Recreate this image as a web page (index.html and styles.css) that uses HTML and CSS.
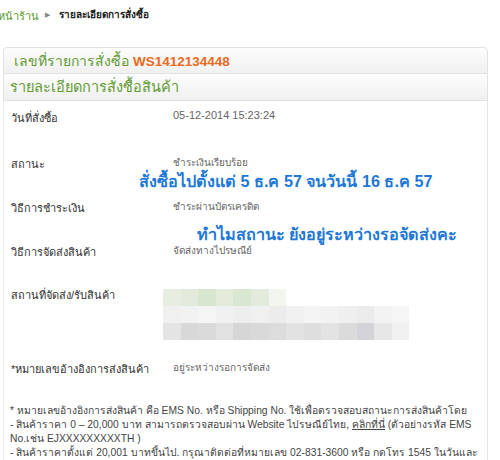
FILE: index.html
```html
<!DOCTYPE html>
<html lang="th">
<head>
    <meta charset="UTF-8">
    <title>รายละเอียดการสั่งซื้อ</title>
    <link rel="stylesheet" href="styles.css">
</head>
<body>
    <!-- Breadcrumb -->
    <div class="crumbs">
        <a href="#">หน้าร้าน</a>
        <span class="arrow">&#9654;</span>
        <b>รายละเอียดการสั่งซื้อ</b>
    </div>

    <!-- Order box -->
    <div class="order">
        <div class="order-head">เลขที่รายการสั่งซื้อ <span class="order-no">WS1412134448</span></div>
        <div class="order-sub">รายละเอียดการสั่งซื้อสินค้า</div>

        <div class="order-body">
            <div class="row r-date">
                <div class="label">วันที่สั่งซื้อ</div>
                <div class="value num">05-12-2014 15:23:24</div>
            </div>
            <div class="row r-status">
                <div class="label">สถานะ</div>
                <div class="value">ชำระเงินเรียบร้อย</div>
            </div>
            <div class="note-blue n1">สั่งซื้อไปตั้งแต่ 5 ธ.ค 57 จนวันนี้ 16 ธ.ค 57</div>
            <div class="row r-pay">
                <div class="label">วิธีการชำระเงิน</div>
                <div class="value">ชำระผ่านบัตรเครดิต</div>
            </div>
            <div class="note-blue n2">ทำไมสถานะ ยังอยู่ระหว่างรอจัดส่งคะ</div>
            <div class="row r-ship">
                <div class="label">วิธีการจัดส่งสินค้า</div>
                <div class="value">จัดส่งทางไปรษณีย์</div>
            </div>
            <div class="row r-addr">
                <div class="label">สถานที่จัดส่ง/รับสินค้า</div>
                <div class="mosaic">
                    <div class="mrow">
                        <i style="background:#e7eee1"></i><i style="background:#e2ebdb"></i><i style="background:#d8e5cf"></i><i style="background:#e3ebdb"></i><i style="background:#d9e6d1"></i><i style="background:#e3ecdc"></i><i style="background:#f2f6ee"></i>
                    </div>
                    <div class="mrow">
                        <i style="background:#f0f0f0"></i><i style="background:#f2f2f2"></i><i style="background:#f5f5f5"></i><i style="background:#f1f1f1"></i><i style="background:#eeeeee"></i><i style="background:#f0f0f0"></i><i style="background:#ececec"></i><i style="background:#f1f1f1"></i><i style="background:#f4f4f4"></i><i style="background:#f2f2f2"></i><i style="background:#efefef"></i><i style="background:#ebebeb"></i><i style="background:#f3f3f3"></i><i style="background:#f5f5f5"></i>
                    </div>
                    <div class="mrow">
                        <i style="background:#e4e4e4"></i><i style="background:#d8d8d8"></i><i style="background:#dadada"></i><i style="background:#e1e1e1"></i><i style="background:#d6d6d6"></i><i style="background:#d9d9d9"></i><i style="background:#dcdcdc"></i><i style="background:#e2e2e2"></i><i style="background:#dedede"></i><i style="background:#e3e3e3"></i><i style="background:#dbdbdb"></i><i style="background:#d4d4d8"></i><i style="background:#e6e6e6"></i><i style="background:#f0f0f0"></i>
                    </div>
                </div>
            </div>
            <div class="row r-track">
                <div class="label">*หมายเลขอ้างอิงการส่งสินค้า</div>
                <div class="value">อยู่ระหว่างรอการจัดส่ง</div>
            </div>

            <div class="foot-note">
                <p>* หมายเลขอ้างอิงการส่งสินค้า คือ EMS No. หรือ Shipping No. ใช้เพื่อตรวจสอบสถานะการส่งสินค้าโดย</p>
                <p>- สินค้าราคา 0 – 20,000 บาท สามารถตรวจสอบผ่าน Website ไปรษณีย์ไทย, <a href="#">คลิกที่นี่</a> (ตัวอย่างรหัส EMS</p>
                <p>No.เช่น EJXXXXXXXXXTH )</p>
                <p>- สินค้าราคาตั้งแต่ 20,001 บาทขึ้นไป. กรุณาติดต่อที่หมายเลข 02-831-3600 หรือ กดโทร 1545 ในวันและ</p>
                <p>เวลาทำการ</p>
            </div>
        </div>
    </div>
</body>
</html>
```

FILE: styles.css
```css
/* Reset */
* {
    margin: 0;
    padding: 0;
    box-sizing: border-box;
}

body {
    font-family: Tahoma, 'Liberation Sans', 'Noto Sans', sans-serif;
    font-size: 11px;
    color: #333;
    background: #fff;
    width: 500px;
    height: 460px;
    overflow: hidden;
}

/* Breadcrumb */
.crumbs {
    height: 35px;
    padding-top: 7px;
    font-size: 11px;
    display: flex;
    align-items: flex-start;
    gap: 6px;
}

.crumbs a {
    color: #5a9a2e;
    text-decoration: none;
    margin-left: -2px;
}

.crumbs .arrow {
    color: #888;
    font-size: 7px;
    line-height: 15px;
}

.crumbs b {
    color: #222;
    font-size: 10px;
    line-height: 16px;
    margin-left: 3px;
}

/* Order box */
.order {
    margin: 12px 12px 0 3px;
}

.order-head,
.order-sub {
    height: 27px;
    line-height: 26px;
    background: linear-gradient(#fdfdfd, #f0f0f0);
    border: 1px solid #e2e2e2;
    color: #629a34;
    font-size: 14px;
}

.order-head {
    border-radius: 4px 4px 0 0;
    padding-left: 10px;
}

.order-sub {
    border-top: none;
    padding-left: 6px;
    font-size: 14.5px;
}

.order-no {
    color: #ea6a1e;
    font-weight: bold;
    font-size: 13.5px;
}

.order-body {
    border-left: 1px solid #ececec;
    border-right: 1px solid #e6e6e6;
    padding: 8px 0 0 7px;
}

.row {
    display: flex;
}

.row .label {
    width: 162px;
    color: #333;
}

.row .value {
    color: #666;
    font-size: 10px;
}

.row .value.num {
    font-size: 11px;
}

.r-date { height: 46px; }
.r-status { height: 14px; }
.r-pay { height: 24px; }
.r-ship { height: 43px; }
.r-addr { height: 74px; }
.r-track { height: 44px; }

.note-blue {
    color: #1f78d6;
    font-weight: bold;
    font-size: 16.2px;
    line-height: 20px;
    white-space: nowrap;
}

.n1 {
    padding-left: 128px;
    height: 30px;
    padding-top: 2px;
}

.n2 {
    padding-left: 186px;
    height: 20px;
    padding-top: 1px;
}

/* Blurred address */
.mosaic {
    margin-top: 3px;
    margin-left: -10px;
}

.mrow {
    display: flex;
    height: 17px;
}

.mrow i {
    width: 17.6px;
    height: 17px;
}

/* Footer notes */
.foot-note {
    color: #444;
    font-size: 10.3px;
    line-height: 14px;
    margin-left: -1px;
    white-space: nowrap;
}

.foot-note a {
    color: #444;
}
```
